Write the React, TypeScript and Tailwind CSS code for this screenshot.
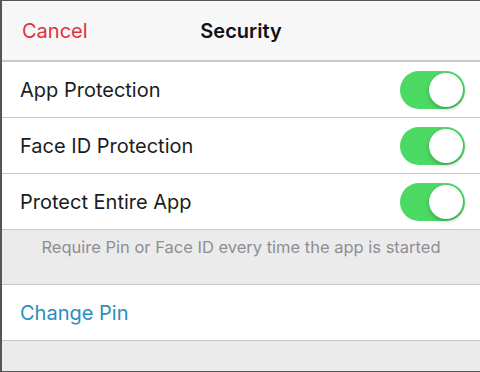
import React from 'react';

type RowProps = { label: string; on: boolean };

function Toggle({ on }: { on: boolean }) {
    return (
        <div
            className={`relative h-[38px] w-[65px] rounded-full ${on ? 'bg-[#4cd964]' : 'bg-[#e5e5ea]'}`}
        >
            <div
                className={`absolute top-[2px] h-[34px] w-[34px] rounded-full bg-white shadow-[0_2px_4px_rgba(0,0,0,0.25)] ${on ? 'right-[2px]' : 'left-[2px]'}`}
            />
        </div>
    );
}

function ToggleRow({ label, on }: RowProps) {
    return (
        <div className="flex h-[56px] shrink-0 items-center justify-between border-b border-[#c8c7cc] bg-white pl-[18px] pr-[15px]">
            <span className="text-[20px] text-[#1c1c1c]">{label}</span>
            <Toggle on={on} />
        </div>
    );
}

const App = () => {
    const rows: RowProps[] = [
        { label: 'App Protection', on: true },
        { label: 'Face ID Protection', on: true },
        { label: 'Protect Entire App', on: true },
    ];

    return (
        <div
            className="flex h-[372px] w-[480px] flex-col overflow-hidden border-l-2 border-t border-b border-[#555] bg-[#ebebeb]"
            style={{ fontFamily: 'Inter, "Noto Sans", sans-serif' }}
        >
            {/* Nav bar */}
            <div className="relative flex h-[61px] shrink-0 items-center border-b-2 border-[#c8c7cc] bg-[#f7f7f7] px-[20px]">
                <span className="text-[20px] text-[#e0313c]">Cancel</span>
                <span className="absolute left-1/2 -translate-x-1/2 text-[20px] font-semibold text-[#111]">
                    Security
                </span>
            </div>

            {rows.map((r) => (
                <ToggleRow key={r.label} label={r.label} on={r.on} />
            ))}

            {/* Footer note */}
            <div className="h-[55px] shrink-0 border-b border-[#c8c7cc] pt-[5px] text-center text-[16.5px] text-[#8e8e93]">
                Require Pin or Face ID every time the app is started
            </div>

            <div className="flex h-[56px] shrink-0 items-center border-b border-[#c8c7cc] bg-white px-[18px]">
                <span className="text-[20px] text-[#2a8ec0]">Change Pin</span>
            </div>
        </div>
    );
};

export default App;
